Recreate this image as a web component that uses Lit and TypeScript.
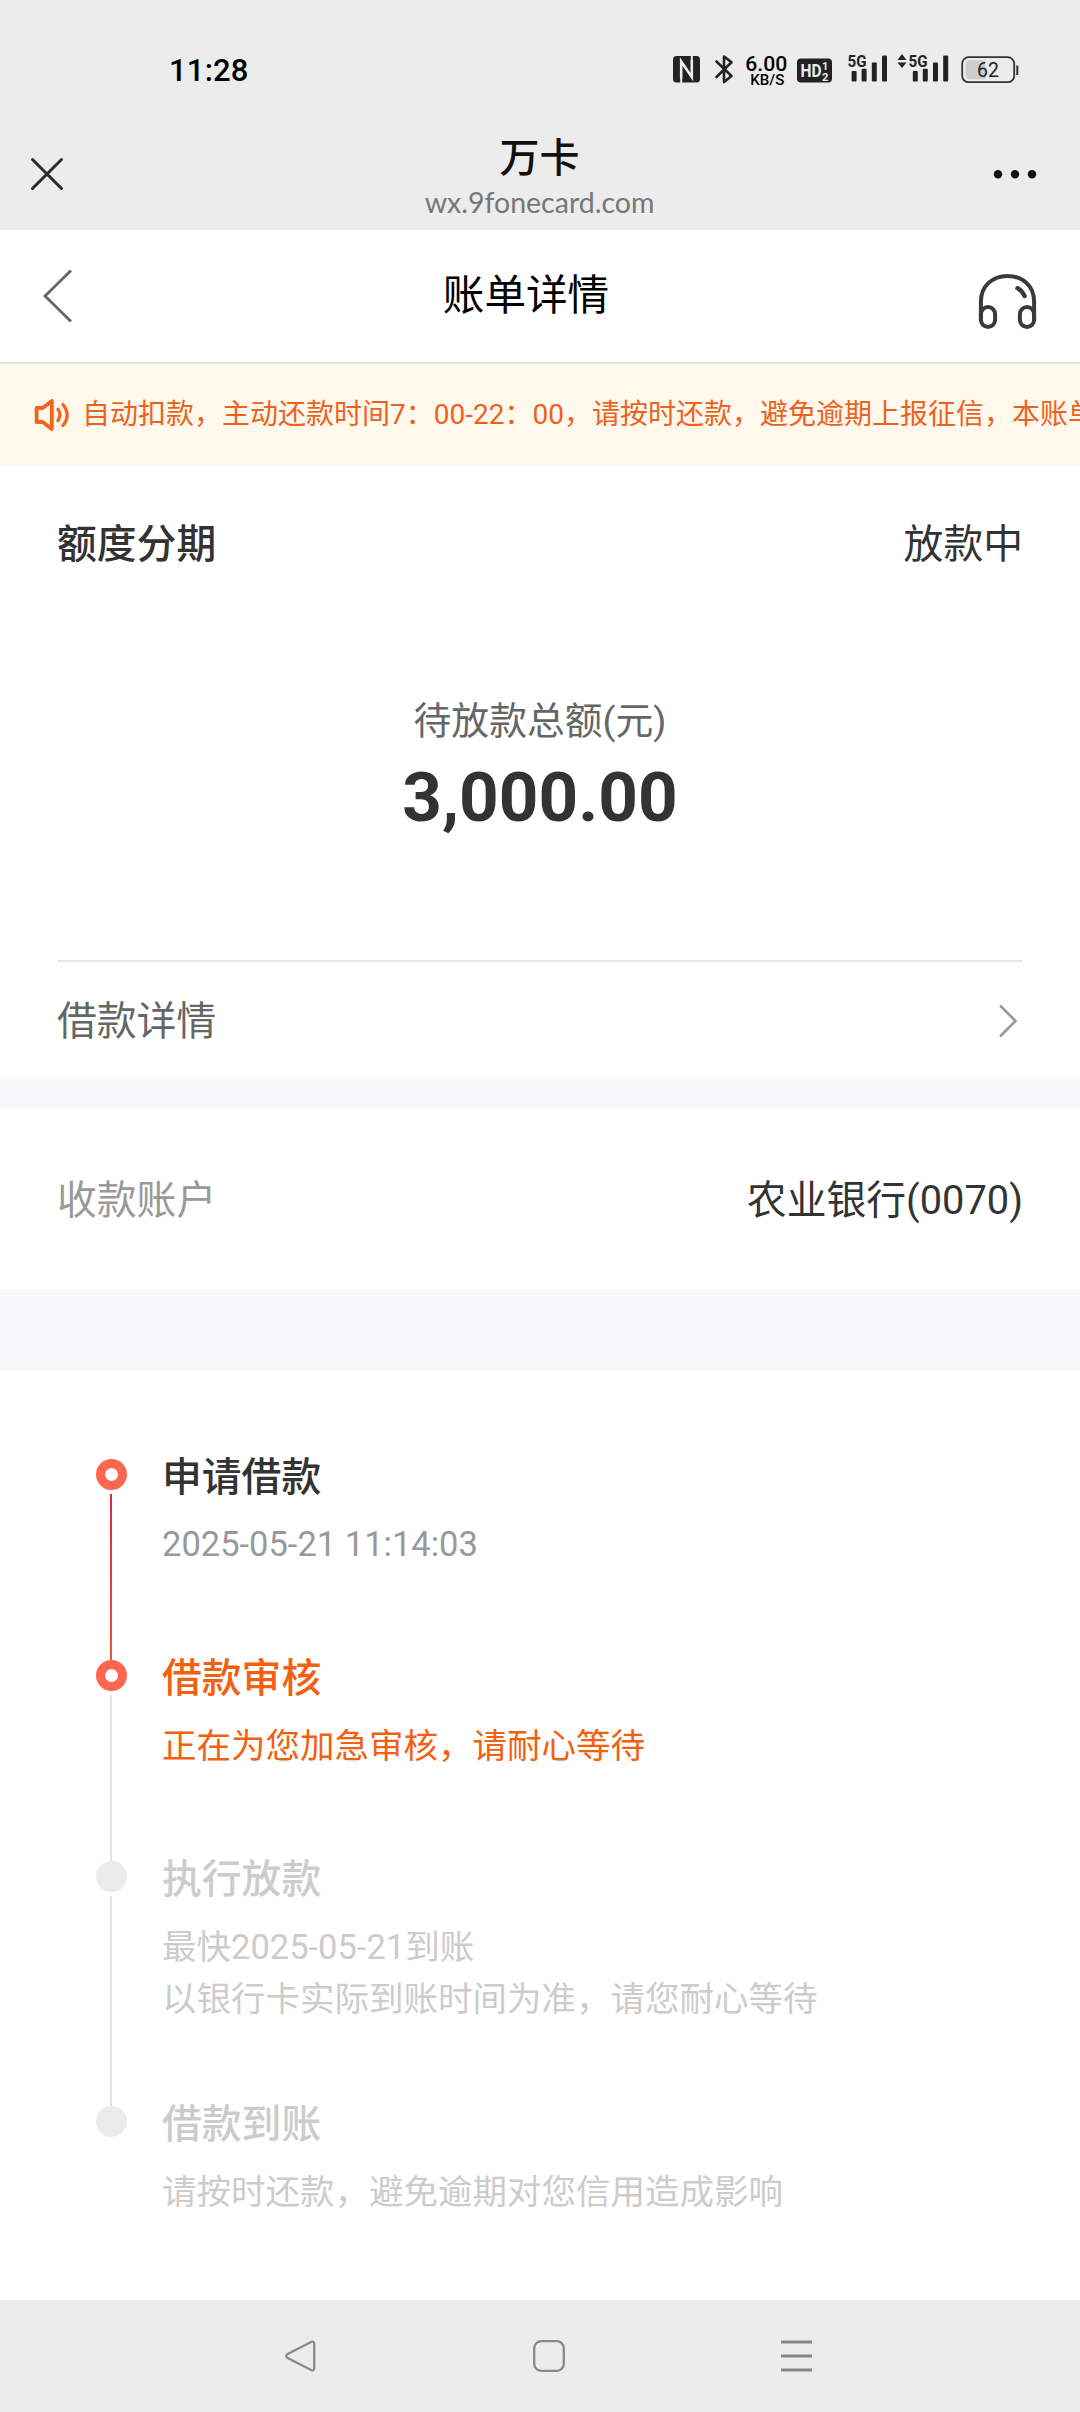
import { LitElement, html, css, svg } from "lit";
import { customElement } from "lit/decorators.js";
import { classMap } from "lit/directives/class-map.js";

type StepState = "done" | "current" | "pending";

interface Step {
  title: string;
  lines: string[];
  state: StepState;
}

const STEPS: Step[] = [
  { title: "申请借款", lines: ["2025-05-21 11:14:03"], state: "done" },
  { title: "借款审核", lines: ["正在为您加急审核，请耐心等待"], state: "current" },
  {
    title: "执行放款",
    lines: ["最快2025-05-21到账", "以银行卡实际到账时间为准，请您耐心等待"],
    state: "pending",
  },
  { title: "借款到账", lines: ["请按时还款，避免逾期对您信用造成影响"], state: "pending" },
];

@customElement("status-bar")
class StatusBar extends LitElement {
  static styles = css`
    :host {
      display: flex;
      align-items: flex-start;
      height: 115px;
      padding-left: 169px;
      box-sizing: border-box;
      font-family: Roboto, "Noto Sans CJK SC", sans-serif;
    }
    .time {
      width: 504px;
      padding-top: 52px;
      font-size: 31px;
      line-height: 37px;
      letter-spacing: 0.2px;
      font-weight: 500;
      color: #000;
    }
    svg {
      display: block;
      flex: none;
      margin-top: 50px;
    }
    .medium {
      font-weight: 500;
    }
    .bold {
      font-weight: 700;
    }
  `;

  private bars(x: number) {
    return svg`<g fill="#222">
      <rect x=${x} y="21" width="5" height="10.5" rx="1"/>
      <rect x=${x + 10} y="18.7" width="5" height="12.8" rx="1"/>
      <rect x=${x + 20.2} y="12.5" width="5" height="19" rx="1"/>
      <rect x=${x + 30.4} y="5.5" width="5" height="26" rx="1"/>
    </g>`;
  }

  render() {
    return html`
      <div class="time">11:28</div>
      <svg width="372" height="40" viewBox="0 0 372 40">
        <rect x="0" y="6" width="27" height="26.5" rx="3.5" fill="#222" />
        <path d="M8.2 28.5V11.5L18.8 27V10" fill="none" stroke="#ececec" stroke-width="2.6" />
        <path d="M8.2 28V33M18.8 5.5V11" stroke="#ececec" stroke-width="2" />
        <path d="M43.5 11.5L58.5 26L51 32V6.5L58.5 12.3L43.5 27" fill="none" stroke="#222" stroke-width="2.6" stroke-linejoin="round" stroke-linecap="round" />
        <text x="93.3" y="20.8" font-size="20.5" text-anchor="middle" textLength="42" lengthAdjust="spacingAndGlyphs" class="medium">6.00</text>
        <text x="94.3" y="35" font-size="14.5" text-anchor="middle" textLength="34" lengthAdjust="spacingAndGlyphs" class="medium">KB/S</text>
        <rect x="124" y="8.5" width="35" height="24" rx="4" fill="#222" />
        <g fill="#ececec" class="bold">
          <text x="127.5" y="27" font-size="18.5" textLength="21" lengthAdjust="spacingAndGlyphs">HD</text>
          <text x="149" y="19.8" font-size="11">1</text>
          <text x="149" y="30.5" font-size="11">2</text>
        </g>
        <text x="174.5" y="17.3" font-size="17" textLength="19" lengthAdjust="spacingAndGlyphs" class="bold" fill="#222">5G</text>
        ${this.bars(178.6)}
        <path d="M224.5 10L229 4L233.5 10ZM224.5 12.5H233.5L229 18Z" fill="#222" />
        <text x="235.5" y="17.3" font-size="17" textLength="19" lengthAdjust="spacingAndGlyphs" class="bold" fill="#222">5G</text>
        ${this.bars(239.8)}
        <rect x="289.2" y="7.2" width="52" height="25" rx="6.5" fill="none" stroke="#333" stroke-width="1.8" />
        <path d="M297 10.3H312.5V29.2H297Q292.6 29.2 292.6 24.8V14.7Q292.6 10.3 297 10.3Z" fill="#ccc" />
        <rect x="343.3" y="15.5" width="2" height="9.5" fill="#333" />
        <text x="315" y="26.7" font-size="19.5" text-anchor="middle" fill="#222">62</text>
      </svg>
    `;
  }
}

@customElement("progress-timeline")
class ProgressTimeline extends LitElement {
  static styles = css`
    :host {
      display: block;
      padding: 88px 60px 0 96px;
      font-family: Roboto, "Noto Sans CJK SC", sans-serif;
    }
    .step {
      display: flex;
      gap: 35px;
    }
    .rail {
      width: 31px;
      display: flex;
      flex-direction: column;
      align-items: center;
    }
    .dot {
      box-sizing: border-box;
      flex: none;
      width: 31px;
      height: 31px;
      border-radius: 50%;
      background: #ebebeb;
    }
    .reached .dot {
      border: 9.5px solid #ff6650;
      background: #fff;
    }
    .line {
      flex: 1;
      width: 2px;
      margin: 4px 1px 0 0;
      background: #e1e1e1;
    }
    .done .line {
      background: linear-gradient(#e5214f, #ee5138);
    }
    .step:last-child .line {
      display: none;
    }
    .body {
      padding-bottom: 89px;
      color: #ccc;
    }
    .title {
      font-size: 39.8px;
      line-height: 37px;
      font-weight: 500;
      margin-bottom: 23px;
    }
    .text {
      font-size: 34.5px;
      line-height: 52px;
      white-space: nowrap;
    }
    .done .title {
      color: #333;
    }
    .done .text {
      color: #999;
      line-height: 50px;
      padding-bottom: 2px;
    }
    .current .body {
      color: #f26010;
    }
    .pending .body {
      padding-bottom: 81px;
    }
  `;

  render() {
    return STEPS.map(
      (s) => html`
        <div class=${classMap({ step: true, [s.state]: true, reached: s.state !== "pending" })}>
          <div class="rail"><div class="dot"></div><div class="line"></div></div>
          <div class="body">
            <div class="title">${s.title}</div>
            ${s.lines.map((l) => html`<div class="text">${l}</div>`)}
          </div>
        </div>
      `
    );
  }
}

@customElement("app-root")
class AppRoot extends LitElement {
  static styles = css`
    :host {
      display: flex;
      flex-direction: column;
      height: 2412px;
      width: 1080px;
      overflow: hidden;
      background: #fff;
      color: #333;
      font-family: Roboto, "Noto Sans CJK SC", sans-serif;
    }
    svg {
      display: block;
      flex: none;
    }
    .chrome {
      height: 230px;
      flex: none;
      background: #ececec;
    }
    .webbar {
      display: grid;
      grid-template-columns: 1fr auto 1fr;
      padding: 0 43px 0 30px;
    }
    .webbar svg {
      margin-top: 42px;
    }
    .webbar svg:last-child {
      justify-self: end;
    }
    .site {
      text-align: center;
      padding: 18px 0 0 12px;
    }
    .site-name {
      font-size: 40px;
      line-height: 52px;
      font-weight: 500;
      color: #111;
    }
    .site-url {
      font-family: Lato, Roboto, sans-serif;
      font-size: 28.5px;
      line-height: 35px;
      color: #777;
    }
    .header {
      display: grid;
      grid-template-columns: 1fr auto 1fr;
      align-items: center;
      height: 132px;
      flex: none;
      padding: 0 43px 0 42px;
      border-bottom: 2px solid #e6e6e6;
    }
    .header-title {
      font-size: 41.6px;
      line-height: 60px;
      padding-right: 27px;
      color: #000;
    }
    .phones {
      justify-self: end;
      margin-top: 9px;
    }
    .notice {
      display: flex;
      align-items: center;
      height: 102px;
      flex: none;
      background: #fff8ec;
      padding-left: 34px;
      gap: 12px;
      overflow: hidden;
    }
    .notice-text {
      font-size: 28px;
      line-height: 40px;
      color: #ec621c;
      white-space: nowrap;
    }
    .row {
      display: flex;
      justify-content: space-between;
      align-items: center;
      flex: none;
      font-size: 39.8px;
      line-height: 56px;
      padding: 2px 57px 0;
      box-sizing: border-box;
    }
    .product {
      height: 156px;
    }
    .product-name {
      font-weight: 500;
    }
    .amount {
      height: 338px;
      flex: none;
      text-align: center;
      color: #666;
    }
    .amount-label {
      padding-top: 74px;
      font-size: 37.8px;
      line-height: 50px;
    }
    .amount-value {
      font-size: 69.2px;
      line-height: 80px;
      padding-top: 12px;
      font-weight: 700;
      color: #333;
    }
    .rule {
      height: 2px;
      flex: none;
      margin: 0 57px;
      background: #e9e9e9;
    }
    .detail {
      height: 117px;
      color: #666;
    }
    .detail svg {
      margin: 0 5px 2px 0;
    }
    .band {
      height: 30px;
      flex: none;
      background: #f7f8fa;
    }
    .band-tall {
      height: 82px;
    }
    .account {
      height: 180px;
      padding-top: 4px;
    }
    .account-label {
      color: #999;
    }
    progress-timeline {
      flex: 1;
      min-height: 0;
    }
    .navbar {
      display: flex;
      align-items: center;
      justify-content: space-between;
      height: 112px;
      flex: none;
      box-sizing: border-box;
      padding: 0 267px 0 284px;
      background: #ececec;
    }
  `;

  render() {
    return html`
      <div class="chrome">
        <status-bar></status-bar>
        <div class="webbar">
          <svg width="34" height="34" viewBox="0 0 34 34">
            <path d="M2.5 2.5L31.5 31.5M31.5 2.5L2.5 31.5" stroke="#2b2b2b" stroke-width="3" stroke-linecap="round" />
          </svg>
          <div class="site">
            <div class="site-name">万卡</div>
            <div class="site-url">wx.9fonecard.com</div>
          </div>
          <svg width="44" height="34" viewBox="0 0 44 34">
            <circle cx="5" cy="17.3" r="4.2" fill="#111" />
            <circle cx="22" cy="17.3" r="4.2" fill="#111" />
            <circle cx="39" cy="17.3" r="4.2" fill="#111" />
          </svg>
        </div>
      </div>

      <div class="header">
        <svg width="31" height="54" viewBox="0 0 31 54">
          <path d="M29 1.5L3 27L29 52.5" fill="none" stroke="#666" stroke-width="2.8" />
        </svg>
        <div class="header-title">账单详情</div>
        <svg class="phones" width="60" height="56" viewBox="0 0 60 56" fill="none" stroke="#3a3a3a" stroke-width="4">
          <path d="M3.9 46V28.5C3.9 13 15.5 2.9 30.5 2.9S57.1 13 57.1 28.5V46" />
          <rect x="3.9" y="34" width="14.2" height="20" rx="7.1" />
          <rect x="42.9" y="34" width="14.2" height="20" rx="7.1" />
          <path d="M40.5 15.2Q45 17.7 47.6 23" stroke-width="4.4" stroke-linecap="round" />
        </svg>
      </div>

      <div class="notice">
        <svg width="36" height="34" viewBox="0 0 36 34" fill="none" stroke="#f5621c" stroke-width="3.8" stroke-linejoin="round">
          <path d="M2.6 10H8.7L17.8 3V31L8.7 24H2.6Z" />
          <path d="M24 11.3Q27.8 17 24 22.7M29 6.5Q37.3 17 29 27.5" stroke-width="3.2" stroke-linecap="round" />
        </svg>
        <div class="notice-text">自动扣款，主动还款时间7：00-22：00，请按时还款，避免逾期上报征信，本账单</div>
      </div>

      <div class="row product">
        <span class="product-name">额度分期</span>
        <span>放款中</span>
      </div>
      <div class="amount">
        <div class="amount-label">待放款总额(元)</div>
        <div class="amount-value">3,000.00</div>
      </div>
      <div class="rule"></div>
      <div class="row detail">
        <span>借款详情</span>
        <svg width="20" height="34" viewBox="0 0 20 34">
          <path d="M2 1.5L17.5 17L2 32.5" fill="none" stroke="#999" stroke-width="2.6" />
        </svg>
      </div>
      <div class="band"></div>
      <div class="row account">
        <span class="account-label">收款账户</span>
        <span>农业银行(0070)</span>
      </div>
      <div class="band band-tall"></div>

      <progress-timeline></progress-timeline>

      <div class="navbar">
        <svg width="33" height="32" viewBox="0 0 33 32">
          <path d="M27.6 1.7L3.2 14.3Q1 16 3.2 17.7L27.6 30.3Q30.2 31 30.2 28.5V3.5Q30.2 1 27.6 1.7Z" fill="none" stroke="#888" stroke-width="2.2" />
        </svg>
        <svg width="32" height="32" viewBox="0 0 32 32">
          <rect x="1.2" y="1.2" width="29.6" height="29.6" rx="7" fill="none" stroke="#888" stroke-width="2.3" />
        </svg>
        <svg width="32" height="32" viewBox="0 0 32 32">
          <path d="M0 2H31M0 16H31M0 30H31" stroke="#888" stroke-width="2.8" />
        </svg>
      </div>
    `;
  }
}
